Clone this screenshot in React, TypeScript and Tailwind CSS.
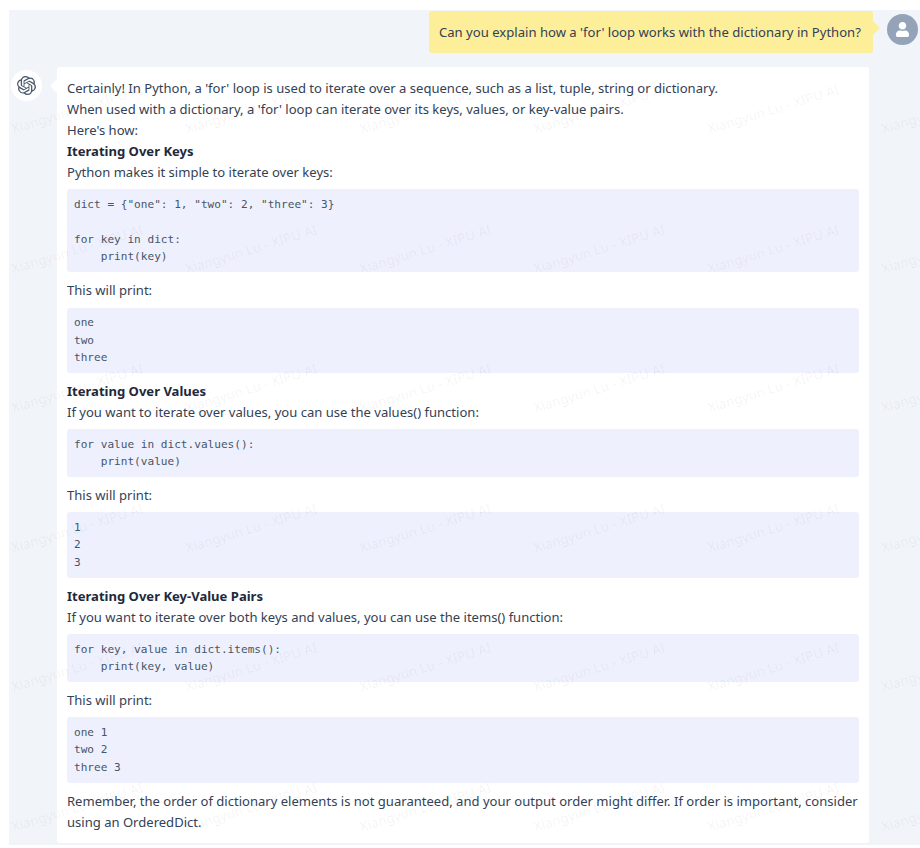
import React from "react";
import { SiOpenai } from "react-icons/si";
import { FaUser } from "react-icons/fa";

const WATERMARK_COUNT = 36;

function P({ children, bold }: { children: React.ReactNode; bold?: boolean }) {
  return <p className={bold ? "font-bold text-[#1e293b]" : ""}>{children}</p>;
}

function Code({ children }: { children: string }) {
  return (
    <pre className="mt-[6.6px] mb-[7.75px] rounded-[3px] bg-[#eef1fd] px-[7px] py-[6.4px] font-['DejaVu_Sans_Mono',monospace] text-[11.1px] leading-[17.6px] text-[#475569]">
      {children}
    </pre>
  );
}

export default function App() {
  return (
    <div className="relative h-[848px] w-[920px] overflow-hidden bg-white pt-[10px] pl-[9px] font-['Noto_Sans',sans-serif] text-[13.05px] leading-[20.9px] text-[#334155]">
      <div className="h-[835px] bg-[#f1f5f9] pt-px">
        <div className="flex items-start justify-end pr-[2px]">
          <div className="relative flex h-[42px] w-[444px] items-center rounded-[3px] bg-[#fdee9a] pl-[10px] text-[13.1px]">
            <span>Can you explain how a 'for' loop works with the dictionary in Python?</span>
            <div className="absolute top-[10px] right-[-7px] h-0 w-0 border-y-[7px] border-l-[7px] border-y-transparent border-l-[#fdee9a]" />
          </div>
          <div className="ml-[14px] mt-[3px] flex h-[31px] w-[31px] items-center justify-center rounded-full bg-[#94a3b8] text-white">
            <FaUser size={15} />
          </div>
        </div>
        <div className="mt-[14px] flex items-start pl-[2px]">
          <div className="mt-[3px] flex h-[31px] w-[31px] items-center justify-center rounded-full bg-white text-[#475569]">
            <SiOpenai size={19} />
          </div>
          <div className="relative ml-[15px] h-[776px] w-[812px] rounded-[3px] bg-white px-[10px] pt-[11px]">
            <div className="absolute top-[12px] left-[-7px] h-0 w-0 border-y-[7px] border-r-[7px] border-y-transparent border-r-white" />
            <P>Certainly! In Python, a 'for' loop is used to iterate over a sequence, such as a list, tuple, string or dictionary.</P>
            <P>When used with a dictionary, a 'for' loop can iterate over its keys, values, or key-value pairs.</P>
            <P>Here's how:</P>
            <P bold>Iterating Over Keys</P>
            <P>Python makes it simple to iterate over keys:</P>
            <Code>{`dict = {"one": 1, "two": 2, "three": 3}

for key in dict:
    print(key)`}</Code>
            <P>This will print:</P>
            <Code>{`one
two
three`}</Code>
            <P bold>Iterating Over Values</P>
            <P>If you want to iterate over values, you can use the values() function:</P>
            <Code>{`for value in dict.values():
    print(value)`}</Code>
            <P>This will print:</P>
            <Code>{`1
2
3`}</Code>
            <P bold>Iterating Over Key-Value Pairs</P>
            <P>If you want to iterate over both keys and values, you can use the items() function:</P>
            <Code>{`for key, value in dict.items():
    print(key, value)`}</Code>
            <P>This will print:</P>
            <Code>{`one 1
two 2
three 3`}</Code>
            <P>Remember, the order of dictionary elements is not guaranteed, and your output order might differ. If order is important, consider using an OrderedDict.</P>
          </div>
        </div>
      </div>
      <div className="pointer-events-none absolute top-[40px] left-[-10px] grid grid-cols-[repeat(6,174px)] auto-rows-[139.5px]">
        {Array.from({ length: WATERMARK_COUNT }).map((_, i) => (
          <div key={i} className="flex items-center justify-center">
            <span className="-rotate-[17deg] whitespace-nowrap text-[13.5px] text-[#000000]/[0.06]">Xiangyun Lu - XIPU AI</span>
          </div>
        ))}
      </div>
    </div>
  );
}
